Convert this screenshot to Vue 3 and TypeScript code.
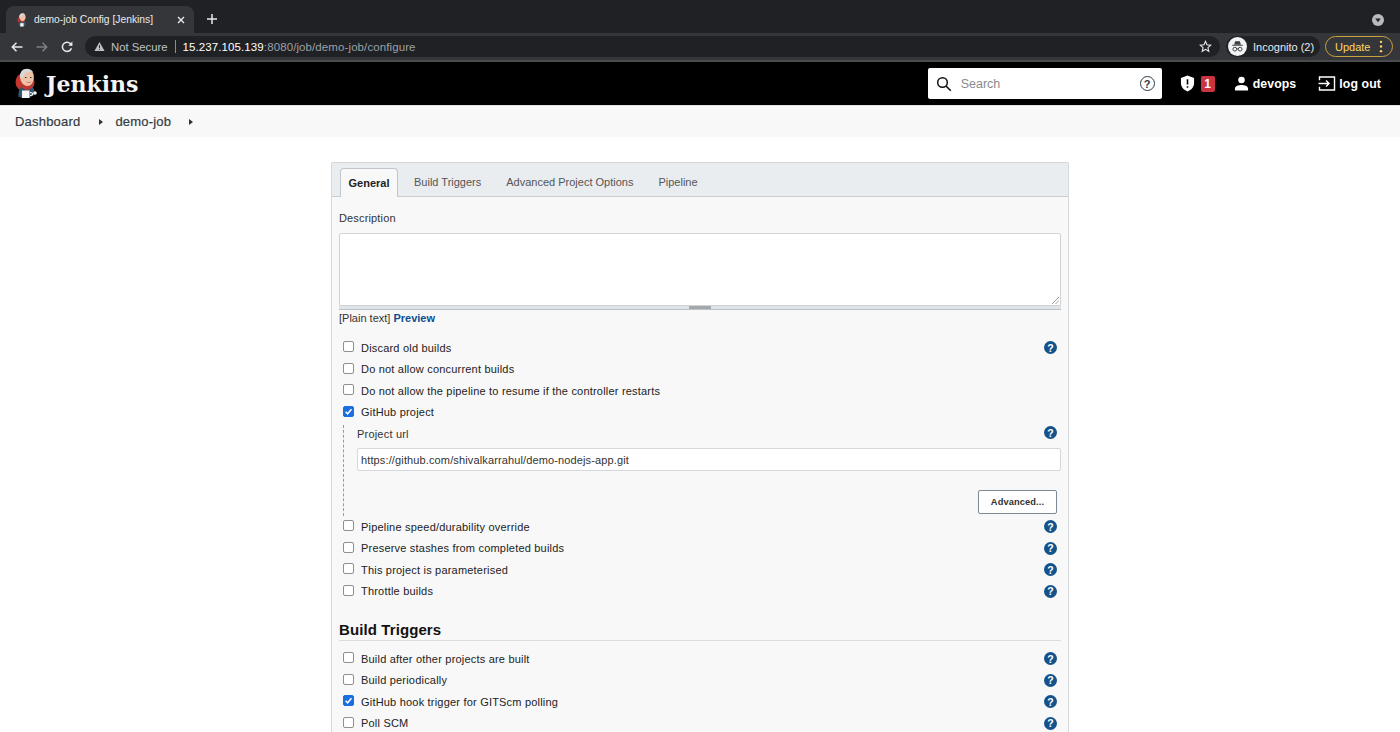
<script setup lang="ts">
interface Row { label: string; checked?: boolean; help?: boolean }
const rowsA: Row[] = [
  { label: 'Discard old builds', help: true },
  { label: 'Do not allow concurrent builds' },
  { label: 'Do not allow the pipeline to resume if the controller restarts' },
  { label: 'GitHub project', checked: true },
]
const rowsB: Row[] = [
  { label: 'Pipeline speed/durability override', help: true },
  { label: 'Preserve stashes from completed builds', help: true },
  { label: 'This project is parameterised', help: true },
  { label: 'Throttle builds', help: true },
]
const rowsC: Row[] = [
  { label: 'Build after other projects are built', help: true },
  { label: 'Build periodically', help: true },
  { label: 'GitHub hook trigger for GITScm polling', checked: true, help: true },
  { label: 'Poll SCM', help: true },
]
const groups = { rowsA, rowsB, rowsC }
const tabs = ['Build Triggers', 'Advanced Project Options', 'Pipeline']
</script>

<template>
  <div class="page">
    <div class="tabstrip">
      <div class="tab">
        <svg class="favicon" viewBox="0 0 24 31" width="11" height="14">
          <circle cx="9" cy="15" r="8" fill="#a8352e" />
          <path d="M5 9C5 3.500 8 1 12 1s7 3 6.800 8.500c-.2 5-3 8.500-6.500 8.500S5.300 14 5 9z" fill="#eec2a6" />
          <path d="M5 10C4.500 4 8 .8 12 .8c2.600 0 5 1.200 6 3.500C14 3 9.500 4.500 8 10z" fill="#d7d7d7" />
          <path d="M3.500 29c-.5-6 1.500-10 4.500-11.500L12 21l4-3.500c2.500 1.500 4 5 4 9l-6 3.500H8z" fill="#33546d" />
          <path d="M9 18 12 21l3-3 1.500 1.500-4.500 2.500-4.500-2.500z" fill="#c5372e" />
          <path d="M7 22.500h7.500V30H7z" fill="#f4f4f4" />
        </svg>
        <span class="tab-title">demo-job Config [Jenkins]</span>
        <svg class="tab-x" viewBox="0 0 10 10" width="10" height="10"><path d="M2 2l6 6M8 2l-6 6" stroke="#e8eaed" stroke-width="1.400" /></svg>
      </div>
      <svg class="new-tab" viewBox="0 0 12 12" width="12" height="12"><path d="M6 1v10M1 6h10" stroke="#e8eaed" stroke-width="1.500" /></svg>
      <div class="strip-space"></div>
      <span class="tab-search"><svg viewBox="0 0 12 12" width="12" height="12"><circle cx="6" cy="6" r="6" fill="#b8babd" /><path d="M3.200 4.600h5.600L6 8.200z" fill="#202124" /></svg></span>
    </div>

    <div class="toolbar">
      <svg class="nav-ico" viewBox="0 0 14 14" width="14" height="14"><path d="M12.500 7h-10M6.500 2.800 2.300 7l4.200 4.200" fill="none" stroke="#e8eaed" stroke-width="1.500" /></svg>
      <svg class="nav-ico" viewBox="0 0 14 14" width="14" height="14"><path d="M1.500 7h10M7.500 2.800 11.700 7l-4.200 4.200" fill="none" stroke="#7d8084" stroke-width="1.500" /></svg>
      <svg class="nav-ico" viewBox="0 0 14 14" width="14" height="14"><path d="M11.400 8.200A4.600 4.600 0 1 1 10.300 3.600L12 5.200" fill="none" stroke="#e8eaed" stroke-width="1.500" /><path d="M12.400 1.600v4.200H8.200z" fill="#e8eaed" /></svg>
      <div class="omnibox">
        <svg viewBox="0 0 12 12" width="11" height="11" class="warn"><path d="M6 1 11.500 11H.5z" fill="#bdc1c6" /><path d="M6 4.500v3.300M6 8.700v1" stroke="#202124" stroke-width="1" /></svg>
        <span class="not-secure">Not Secure</span>
        <span class="omni-sep"></span>
        <span class="url"><b>15.237.105.139</b><span class="url-rest">:8080/job/demo-job/configure</span></span>
        <span class="grow"></span>
        <svg viewBox="0 0 14 14" width="13" height="13"><path d="M7 1.500 8.600 5.200l4 .3-3 2.700.9 3.900L7 10l-3.500 2.100.9-3.900-3-2.700 4-.3z" fill="none" stroke="#e8eaed" stroke-width="1.200" /></svg>
      </div>
      <div class="incognito">
        <svg viewBox="0 0 20 20" width="19" height="19">
          <circle cx="10" cy="10" r="10" fill="#f1f3f4" />
          <path d="M6.500 8 7.500 4.500h5L13.500 8zM4.500 8.200h11v1h-11z" fill="#3c4043" />
          <circle cx="7.200" cy="12.800" r="2" fill="none" stroke="#3c4043" stroke-width="1" />
          <circle cx="12.800" cy="12.800" r="2" fill="none" stroke="#3c4043" stroke-width="1" />
          <path d="M9.200 12.500h1.600" stroke="#3c4043" stroke-width="1" />
        </svg>
        <span>Incognito (2)</span>
      </div>
      <div class="update">
        <span>Update</span>
        <svg viewBox="0 0 4 14" width="4" height="13"><circle cx="2" cy="2" r="1.300" fill="#fdd663" /><circle cx="2" cy="7" r="1.300" fill="#fdd663" /><circle cx="2" cy="12" r="1.300" fill="#fdd663" /></svg>
      </div>
    </div>

    <header class="jenkins">
      <svg class="logo" viewBox="0 0 24 31" width="24" height="31">
        <circle cx="10" cy="14" r="9.500" fill="#c5372e" />
        <path d="M5 9C5 3.500 8 1 12 1s7 3 6.800 8.500c-.2 5-3 8.500-6.500 8.500S5.300 14 5 9z" fill="#eec2a6" />
        <path d="M5 10C4.500 4 8 .8 12 .8c2.600 0 5 1.200 6 3.500C14 3 9.500 4.500 8 10z" fill="#d7d7d7" />
        <path d="M10 9.500h1.500M15 9.500h1.500" stroke="#3a2a20" stroke-width="1" />
        <path d="M11.500 14c1.500.8 3 .8 4.500 0" fill="none" stroke="#a8705a" stroke-width=".8" />
        <path d="M3.500 29c-.5-6 1.500-10 4.500-11.500L12 21l4-3.500c2.500 1.500 4 5 4 9l-6 3.500H8z" fill="#33546d" />
        <path d="M8.500 17.500 12 21l3.500-3.500 2 2-5.500 3-5.500-3z" fill="#c5372e" />
        <path d="M7 22.500h7.500V30H7z" fill="#f4f4f4" />
        <path d="M15 24.500c3.500 0 3.500 3 0 3" fill="none" stroke="#f4f4f4" stroke-width="1.200" />
        <circle cx="20" cy="25" r="1.800" fill="#f4f4f4" />
      </svg>
      <span class="brand">Jenkins</span>
      <span class="grow"></span>
      <div class="searchbox">
        <svg viewBox="0 0 16 16" width="16" height="16"><circle cx="6.500" cy="6.500" r="4.800" fill="none" stroke="#111" stroke-width="1.500" /><path d="M10 10l4.800 4.800" stroke="#111" stroke-width="1.600" /></svg>
        <span class="search-ph">Search</span>
        <span class="grow"></span>
        <span class="search-help">?</span>
      </div>
      <svg class="shield" viewBox="0 0 16 18" width="15" height="17"><path d="M8 .5 15 3v5.500c0 4.200-3 7.500-7 9-4-1.500-7-4.800-7-9V3z" fill="#fff" /><path d="M8 4.500v5.500M8 11.800v1.700" stroke="#000" stroke-width="1.700" /></svg>
      <span class="badge">1</span>
      <svg class="user-ico" viewBox="0 0 16 16" width="15" height="15"><circle cx="8" cy="4.300" r="3.500" fill="#fff" /><path d="M1 15.500v-2c0-2.600 3.800-3.800 7-3.800s7 1.200 7 3.800v2z" fill="#fff" /></svg>
      <span class="nav-text user-name">devops</span>
      <svg class="logout-ico" viewBox="0 0 18 16" width="18" height="15"><path d="M1 4.500V1h16v14H1v-3.500" fill="none" stroke="#fff" stroke-width="1.500" /><path d="M0 8h11M8 4.800 11.200 8 8 11.200" fill="none" stroke="#fff" stroke-width="1.500" /></svg>
      <span class="nav-text">log out</span>
    </header>

    <nav class="crumbs">
      <span class="crumb">Dashboard</span>
      <span class="caret first"></span>
      <span class="crumb">demo-job</span>
      <span class="caret second"></span>
    </nav>

    <main class="content">
      <section class="panel">
        <div class="tabbar">
          <span class="ptab active">General</span>
          <span v-for="t in tabs" :key="t" class="ptab">{{ t }}</span>
        </div>
        <div class="form">
          <div class="desc-label">Description</div>
          <div class="textarea">
            <svg class="resize" viewBox="0 0 8 8" width="8" height="8"><path d="M1 8l7-7M4.500 8 8 4.500" stroke="#888" stroke-width=".8" /></svg>
          </div>
          <div class="grip"><span></span></div>
          <div class="plain">[Plain text] <a class="preview">Preview</a></div>

          <div class="rows first-rows">
            <div v-for="r in groups.rowsA" :key="r.label" class="row">
              <span class="cb" :class="{ on: r.checked }"><svg v-if="r.checked" viewBox="0 0 10 10" width="9" height="9"><path d="M1.800 5.200 4 7.500l4.300-5" fill="none" stroke="#fff" stroke-width="1.700" /></svg></span>
              <span class="row-label">{{ r.label }}</span>
              <span v-if="r.help" class="help">?</span>
            </div>
          </div>

          <div class="nested">
            <div class="url-head"><span>Project url</span><span class="help">?</span></div>
            <div class="url-input">https://github.com/shivalkarrahul/demo-nodejs-app.git</div>
            <div class="adv-wrap"><span class="adv">Advanced...</span></div>
          </div>

          <div class="rows">
            <div v-for="r in groups.rowsB" :key="r.label" class="row">
              <span class="cb"></span>
              <span class="row-label">{{ r.label }}</span>
              <span v-if="r.help" class="help">?</span>
            </div>
          </div>

          <h2 class="section">Build Triggers</h2>

          <div class="rows">
            <div v-for="r in groups.rowsC" :key="r.label" class="row">
              <span class="cb" :class="{ on: r.checked }"><svg v-if="r.checked" viewBox="0 0 10 10" width="9" height="9"><path d="M1.800 5.200 4 7.500l4.300-5" fill="none" stroke="#fff" stroke-width="1.700" /></svg></span>
              <span class="row-label">{{ r.label }}</span>
              <span v-if="r.help" class="help">?</span>
            </div>
          </div>
        </div>
      </section>
    </main>
  </div>
</template>

<style>
html, body { margin: 0; overflow: hidden; background: #fff; }
</style>

<style scoped>
.page {
  width: 1400px; height: 732px; overflow: hidden;
  font-family: "Liberation Sans", Arial, sans-serif;
  display: flex; flex-direction: column;
}
.grow { flex: 1; }

.tabstrip { height: 33px; background: #202124; display: flex; align-items: flex-end; padding-left: 6px; flex: none; }
.tab {
  width: 188px; height: 27px; background: #35363a; border-radius: 8px 8px 0 0;
  display: flex; align-items: center; padding-left: 11px; box-sizing: border-box; color: #e8eaed;
}
.favicon { margin-right: 6px; }
.tab-title { flex: 1; white-space: nowrap; font-size: 10.300px; }
.tab-x { margin-right: 8px; }
.new-tab { margin: 0 0 8px 12px; }
.strip-space { flex: 1; }
.tab-search { margin: 0 16px 7px 0; height: 12px; line-height: 0; }

.toolbar {
  height: 29px; box-sizing: border-box; background: #35363a; border-bottom: 2px solid #4a4b4f;
  display: flex; align-items: center; padding: 0 0 0 10px; flex: none;
}
.nav-ico { margin-right: 11px; flex: none; }
.omnibox {
  width: 1135px; height: 21px; border-radius: 11px; background: #202124; box-sizing: border-box; flex: none;
  display: flex; align-items: center; padding: 0 8px 0 9px; color: #bdc1c6;
}
.warn { margin-right: 6px; }
.not-secure { white-space: nowrap; font-size: 11.300px; }
.omni-sep { width: 1px; height: 13px; background: #8a8d91; margin: 0 7px; }
.url { white-space: nowrap; color: #fff; font-size: 11.500px; letter-spacing: .1px; }
.url b { font-weight: normal; color: #fff; }
.url-rest { color: #9aa0a6; }
.incognito {
  margin-left: 6px; width: 94px; height: 21px; border-radius: 11px; background: #202124; color: #e8eaed; font-size: 11px; flex: none;
  display: flex; align-items: center; padding-left: 2px; box-sizing: border-box; gap: 6px; white-space: nowrap;
}
.update {
  margin-left: 5px; width: 68px; height: 21px; box-sizing: border-box; border: 1px solid #c9a23f; border-radius: 11px; flex: none;
  display: flex; align-items: center; justify-content: space-between; padding: 0 9px 0 9px; color: #fdd663; font-size: 11px;
}

.jenkins {
  height: 43px; background: #000; display: flex; align-items: center; padding-left: 15px; flex: none; color: #fff;
}
.logo { margin-right: 7px; }
.brand { font-family: "DejaVu Serif", serif; font-weight: 700; font-size: 22px; color: #f4f4f4; }
.searchbox {
  width: 234px; height: 31px; background: #fff; border-radius: 2px; display: flex; align-items: center;
  padding: 0 7px 0 8px; box-sizing: border-box;
}
.search-ph { color: #8a8a8a; font-size: 12.500px; margin-left: 9px; }
.search-help {
  width: 13px; height: 13px; border: 1.500px solid #2c3a47; border-radius: 50%; color: #2c3a47; font-size: 11px; font-weight: 700;
  display: flex; align-items: center; justify-content: center;
}
.shield { margin-left: 18px; }
.badge {
  margin-left: 6px; width: 14px; height: 16px; background: #cc3340; border-radius: 2px; color: #fff; font-weight: 700; font-size: 12px;
  display: flex; align-items: center; justify-content: center;
}
.user-ico { margin-left: 19px; }
.nav-text { font-weight: 700; font-size: 12.300px; letter-spacing: .1px; white-space: nowrap; }
.user-name { margin-left: 4px; }
.logout-ico { margin-left: 22px; margin-right: 3px; }
.nav-text:last-child { margin-right: 19px; }

.crumbs {
  height: 32px; background: #f8f8f8; display: flex; align-items: center; padding-left: 15px; flex: none; box-sizing: border-box;
  border-top: 1px solid #e4e4e4;
}
.crumb { font-size: 13px; color: #333b44; letter-spacing: .2px; -webkit-text-stroke: .2px #333b44; }
.caret { width: 0; height: 0; border-left: 4px solid #333; border-top: 3px solid transparent; border-bottom: 3px solid transparent; }
.caret.first { margin: 0 12px 0 19px; }
.caret.second { margin-left: 18px; }

.content { flex: 1; display: flex; justify-content: center; padding-top: 25px; min-height: 0; }
.panel {
  width: 738px; box-sizing: border-box; background: #f8f8f8; border: 1px solid #d5d8da; border-bottom: 0; border-radius: 2px 2px 0 0; height: 700px;
}
.tabbar {
  height: 34px; box-sizing: border-box; background: #e9edf0; border-bottom: 1px solid #c9ced2; display: flex; align-items: flex-end; padding-left: 8px;
}
.ptab { font-size: 11px; color: #555; height: 27px; display: flex; align-items: center; margin-right: 25px; padding-bottom: 1px; box-sizing: border-box; }
.ptab.active {
  width: 58px; height: 29px; justify-content: center; background: #f8f8f8; border: 1px solid #c0c6cb; border-bottom: 0; border-radius: 4px 4px 0 0;
  color: #222; font-weight: 700; margin-right: 16px; margin-bottom: -1px; padding-bottom: 0;
}
.form { padding: 0 7px; }
.desc-label { font-size: 11px; color: #333; height: 36px; line-height: 42px; letter-spacing: .15px; }
.textarea { position: relative; height: 71px; background: #fff; border: 1px solid #d0d3d6; border-radius: 2px 2px 0 0; }
.resize { position: absolute; right: 1px; bottom: 1px; }
.grip { height: 3px; background: #dfe4e8; border-bottom: 1px solid #bcc3c8; display: flex; justify-content: center; }
.grip span { width: 22px; height: 3px; background: #a5a8ab; }
.plain { font-size: 11px; color: #333; height: 17px; line-height: 17px; }
.preview { color: #0b4f8f; font-weight: 700; }
.rows { display: flex; flex-direction: column; }
.first-rows { margin-top: 10px; }
.row { height: 21.500px; display: flex; align-items: center; position: relative; }
.cb {
  width: 11px; height: 11px; box-sizing: border-box; margin-left: 4px; border: 1px solid #8f8f8f; border-radius: 2px; background: #fff; flex: none;
  display: flex; align-items: center; justify-content: center; margin-top: -2px;
}
.cb.on { background: #1a6fe0; border-color: #1a6fe0; }
.row-label { margin-left: 7px; font-size: 11px; color: #222; letter-spacing: .2px; white-space: nowrap; }
.help {
  width: 13px; height: 13px; border-radius: 50%; background: #14528c; color: #fff; font-weight: 700; font-size: 10.500px;
  display: flex; align-items: center; justify-content: center; position: absolute; right: 4px; top: 4px;
}
.nested {
  position: relative; margin-left: 4px; padding-left: 13px; border-left: 1px dashed #9a9a9a; height: 91px; margin-top: 2px; box-sizing: border-box;
}
.url-head { font-size: 11px; color: #333; height: 18px; display: flex; align-items: center; letter-spacing: .2px; position: relative; }
.url-head .help { top: 1px; }
.url-input {
  margin-top: 5px; height: 23px; box-sizing: border-box; background: #fff; border: 1px solid #d5d8da; border-radius: 2px;
  font-size: 11px; color: #333; display: flex; align-items: center; padding-left: 3px; letter-spacing: .13px;
}
.adv-wrap { display: flex; justify-content: flex-end; margin-top: 19px; padding-right: 4px; }
.adv {
  width: 79px; height: 24px; box-sizing: border-box; background: #fff; border: 1px solid #7c8a96; border-radius: 2px; color: #333; font-weight: 700; font-size: 9.300px;
  display: flex; align-items: center; justify-content: center; letter-spacing: .1px;
}
.section {
  font-size: 15px; font-weight: 700; color: #111; margin: 17px 0 7px; height: 21px; line-height: 21px; border-bottom: 1px solid #dcdcdc; letter-spacing: .1px;
}
</style>
